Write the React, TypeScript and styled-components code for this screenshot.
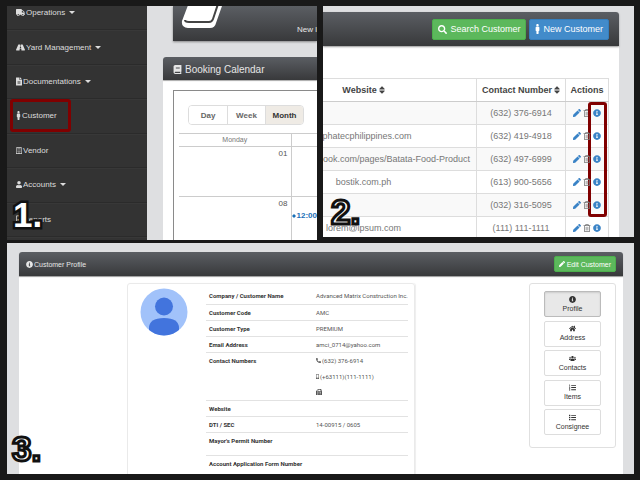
import React from 'react';
import styled, { createGlobalStyle, css } from 'styled-components';
import type { IconType } from 'react-icons';
import {
  FaBook, FaFax, FaFileAlt, FaHome, FaInfoCircle, FaListOl, FaList, FaMale, FaMobileAlt,
  FaPen, FaPhoneAlt, FaRegBuilding, FaRegFileAlt, FaRegTrashAlt, FaRoad, FaSearch,
  FaSort, FaTruck, FaUser, FaUsers,
} from 'react-icons/fa';

const Global = createGlobalStyle`
  * { box-sizing: border-box; }
  body {
    margin: 0;
    background: #191919;
    font-family: "Liberation Sans", Arial, sans-serif;
    color: #555;
  }
  button, table { font: inherit; color: inherit; }
  ul { list-style: none; margin: 0; padding: 0; }
  a { color: inherit; text-decoration: none; }
  svg { flex: none; display: block; }
`;

const barFill = css`
  background: linear-gradient(#5b5e63, #38393b);
  color: #e6e6e6;
`;

const Board = styled.main`
  display: grid;
  grid-template: 234fr 231fr / 310fr 311fr;
  gap: 3px 6px;
  height: 100vh;
  min-height: 480px;
  padding: 6px 6px 6px 7px;
`;

const Panel = styled.section<{ $wide?: boolean; $short?: boolean }>`
  position: relative;
  overflow: hidden;
  min-width: 0;
  min-height: 0;
  background: #dedfe1;
  grid-column: ${p => (p.$wide ? '1 / -1' : 'auto')};
  margin-bottom: ${p => (p.$short ? '3px' : '0')};
`;

const SplitPanel = styled(Panel)`
  display: grid;
  grid-template-columns: 140px 1fr;
`;

const StepNumber = styled.strong<{ $left: number; $solid?: boolean }>`
  position: absolute;
  z-index: 3;
  left: ${p => p.$left}px;
  bottom: 7px;
  font-size: 35px;
  line-height: 36px;
  color: #fff;
  -webkit-text-stroke: ${p => (p.$solid ? 5 : 3)}px #111;
  paint-order: ${p => (p.$solid ? 'stroke' : 'normal')};
`;

const Nav = styled.nav`
  overflow: hidden;
  background: #333;
  color: #ddd;
  font-size: 8px;
`;

const NavList = styled.ul`
  display: flex;
  flex-direction: column;
  height: calc(100% + 10px);
  margin-top: -10px;
  padding-bottom: 3px;
`;

const NavItem = styled.li`
  position: relative;
  flex: 1;
  border-bottom: 1px solid #2b2b2b;
  box-shadow: 0 1px #383838;
`;

const NavLink = styled.a<{ $iconWidth: number }>`
  display: flex;
  align-items: center;
  gap: 1px;
  height: 100%;
  padding-left: 9px;
  svg { width: ${p => p.$iconWidth}px; }
`;

const Caret = styled.i`
  margin-left: 3px;
  border: 3px solid transparent;
  border-top-color: #ddd;
  border-bottom: 0;
`;

const NavHighlight = styled.span`
  position: absolute;
  inset: 0 auto 1px 3px;
  width: 61px;
  border: 3px solid #800000;
  border-radius: 3px;
`;

const Dashboard = styled.div`
  display: flex;
  flex-direction: column;
  gap: 16px;
  min-width: 0;
  overflow: hidden;
`;

const Tile = styled.div`
  ${barFill}
  display: flex;
  justify-content: space-between;
  align-items: flex-end;
  height: 35px;
  margin-left: 26px;
  padding: 0 0 7px 8px;
  font-size: 8px;
  box-shadow: 0 1px 2px #888;
  white-space: nowrap;
`;

const BookArt = styled.svg`
  margin-bottom: 6px;
`;

const CalendarCard = styled.div`
  flex: 1;
  display: flex;
  flex-direction: column;
  margin-left: 16px;
  background: #fff;
  border-radius: 3px 0 0 0;
`;

const CalendarBar = styled.header`
  ${barFill}
  display: flex;
  align-items: center;
  gap: 3px;
  height: 23px;
  padding: 1px 0 0 10px;
  border-radius: 3px 0 0 0;
  box-shadow: 0 1px 1px #aaa;
  font-size: 10px;
`;

const CalendarFrame = styled.div`
  flex: 1;
  margin: 10px 0 0 10px;
  padding: 14px 0 0 5px;
  border: solid #8a8a8a;
  border-width: 1px 0 0 1px;
`;

const ViewSwitch = styled.div`
  display: flex;
  width: fit-content;
  margin-left: 9px;
  border: 1px solid #ddd;
  border-radius: 4px;
  overflow: hidden;
`;

const ViewButton = styled.button<{ $on?: boolean }>`
  width: 38px;
  height: 18px;
  padding: 0;
  border: 0;
  background: ${p => (p.$on ? '#efebe5' : '#fff')};
  font-size: 8px;
  font-weight: bold;
  color: ${p => (p.$on ? '#333' : '#666')};
  & + & { border-left: 1px solid #ddd; }
`;

const MonthTable = styled.table`
  width: 100%;
  margin-top: 8px;
  border-collapse: collapse;
  table-layout: fixed;
  th, td { border: 1px solid #ccc; border-left: 0; padding: 2px 3px; }
  th { height: 13px; padding: 0; font-size: 7px; line-height: 12px; font-weight: normal; color: #777; }
  th:first-child { width: 112px; }
  th:last-child, td:last-child { border-right: 0; }
  td { height: 50px; font-size: 8px; line-height: 10px; text-align: right; vertical-align: top; }
`;

const Booking = styled.a`
  display: flex;
  align-items: center;
  gap: 1px;
  margin: 12px -3px 0;
  font-weight: bold;
  color: #1a70b8;
  white-space: nowrap;
`;

const ListCard = styled.div`
  height: 100%;
  margin: 6px 15px 0 0;
  background: #fff;
  border-radius: 0 3px 0 0;
`;

const ListBar = styled.header`
  ${barFill}
  display: flex;
  justify-content: flex-end;
  align-items: center;
  gap: 3px;
  height: 34px;
  padding-right: 10px;
  border-radius: 0 3px 0 0;
  box-shadow: 0 1px 2px #999;
`;

const BarButton = styled.button<{ $tone: 'green' | 'blue'; $small?: boolean; $iconWidth: number }>`
  display: flex;
  align-items: center;
  justify-content: center;
  gap: ${p => (p.$small ? 2 : 3)}px;
  height: ${p => (p.$small ? 16 : 21)}px;
  padding: 0 ${p => (p.$small ? 4 : 5)}px;
  border: 1px solid ${p => (p.$tone === 'green' ? '#4cae4c' : '#357ebd')};
  border-radius: 2px;
  background: ${p => (p.$tone === 'green' ? '#5cb85c' : '#428bca')};
  color: #fff;
  font-size: ${p => (p.$small ? 7 : 9)}px;
  white-space: nowrap;
  svg { width: ${p => p.$iconWidth}px; }
`;

const TableClip = styled.div`
  display: flex;
  justify-content: flex-end;
  margin: 32px 10px 0 0;
`;

const CustomerTable = styled.table`
  flex: none;
  width: calc(100% + 73px);
  border-collapse: collapse;
  table-layout: fixed;
  font-size: 9px;
  text-align: center;
  white-space: nowrap;
  th, td { height: 23px; padding: 0; border: 1px solid #ddd; line-height: 10px; }
  th { color: #444; border-bottom-color: #ccc; }
  td { color: #777; }
  th:nth-child(2) { width: 89px; }
  th:nth-child(3) { width: 43px; }
  tbody tr:nth-child(odd) { background: #f9f9f9; }
`;

const Sorted = styled.span`
  display: inline-flex;
  align-items: center;
  gap: 2px;
  svg { width: 6px; }
`;

const Actions = styled.div`
  position: relative;
  display: flex;
  justify-content: center;
  gap: 2px;
`;

const IconButton = styled.button`
  display: flex;
  padding: 0;
  border: 0;
  background: none;
  color: #3a83c6;
`;

const ColumnHighlight = styled.span`
  position: absolute;
  top: -7px;
  right: 1px;
  width: 19px;
  height: 115px;
  border: 3px solid #800000;
  border-radius: 3px;
`;

const ProfileCard = styled.div`
  height: 100%;
  margin: 9px 11px 0 12px;
  background: #fff;
  border-radius: 3px 3px 0 0;
`;

const ProfileBar = styled.header`
  ${barFill}
  display: flex;
  align-items: center;
  justify-content: space-between;
  height: 24px;
  padding: 0 7px;
  border-radius: 3px 3px 0 0;
  box-shadow: 0 1px 1px #999;
`;

const ProfileTitle = styled.h2`
  display: flex;
  align-items: center;
  gap: 1px;
  margin: 0;
  font-size: 7px;
  font-weight: normal;
`;

const ProfileBody = styled.div`
  display: flex;
  justify-content: space-between;
  align-items: flex-start;
  padding: 7px 7px 0 108px;
`;

const Details = styled.div`
  display: flex;
  justify-content: space-between;
  align-items: flex-start;
  width: 288px;
  height: 210px;
  padding: 4px 6px 0 12px;
  border: 1px solid #eaeaea;
  border-radius: 3px;
  box-shadow: 1px 0 1px #eee;
`;

const DetailTable = styled.table`
  width: 202px;
  border-collapse: collapse;
  table-layout: fixed;
  font-family: Roboto, "Liberation Sans", sans-serif;
  font-size: 6px;
  line-height: 9px;
  text-align: left;
  white-space: nowrap;
  th, td { padding: 3px; vertical-align: top; border-bottom: 1px solid #e2e2e2; }
  th { width: 107px; color: #333; }
  td { color: #555; }
`;

const DetailRow = styled.tr<{ $tall?: boolean }>`
  height: ${p => (p.$tall ? 23 : 16)}px;
`;

const Phones = styled.ul`
  display: grid;
  gap: 7px;
`;

const PhoneLine = styled.li<{ $iconWidth: number }>`
  display: flex;
  align-items: center;
  gap: 1px;
  height: 9px;
  svg { width: ${p => p.$iconWidth}px; }
`;

const TabCard = styled.aside`
  width: 87px;
  height: 165px;
  padding: 7px 14px 0;
  border: 1px solid #e0e0e0;
  border-radius: 3px;
`;

const TabStack = styled.div`
  display: grid;
  align-content: space-between;
  height: 144px;
`;

const TabButton = styled.button<{ $on?: boolean }>`
  display: flex;
  flex-direction: column;
  align-items: center;
  justify-content: center;
  gap: 1px;
  height: 26px;
  padding: 0;
  border: 1px solid ${p => (p.$on ? '#bbb' : '#ddd')};
  border-radius: 2px;
  background: ${p => (p.$on ? '#e8e8e8' : '#fff')};
  box-shadow: ${p => (p.$on ? 'inset 0 1px 2px #ccc' : 'none')};
  color: #333;
  font-size: 7px;
  line-height: 9px;
`;

const menu: { label: string; icon: IconType; iconWidth: number; caret?: boolean; marked?: boolean }[] = [
  { label: 'Operations', icon: FaTruck, iconWidth: 9, caret: true },
  { label: 'Yard Management', icon: FaRoad, iconWidth: 9, caret: true },
  { label: 'Documentations', icon: FaFileAlt, iconWidth: 6, caret: true },
  { label: 'Customer', icon: FaMale, iconWidth: 5, marked: true },
  { label: 'Vendor', icon: FaRegBuilding, iconWidth: 6 },
  { label: 'Accounts', icon: FaUser, iconWidth: 6, caret: true },
  { label: 'Reports', icon: FaRegFileAlt, iconWidth: 6 },
];

const customers = [
  ['', '(632) 376-6914'],
  ['alphatecphilippines.com', '(632) 419-4918'],
  ['http://www.facebook.com/pages/Batata-Food-Product', '(632) 497-6999'],
  ['bostik.com.ph', '(613) 900-5656'],
  ['', '(032) 316-5095'],
  ['lorem@ipsum.com', '(111) 111-1111'],
];

const tabs: [string, IconType][] = [
  ['Profile', FaInfoCircle],
  ['Address', FaHome],
  ['Contacts', FaUsers],
  ['Items', FaListOl],
  ['Consignee', FaList],
];

const details: { label: string; value?: React.ReactNode; tall?: boolean }[] = [
  { label: 'Company / Customer Name', value: 'Advanced Matrix Construction Inc.' },
  { label: 'Customer Code', value: 'AMC' },
  { label: 'Customer Type', value: 'PREMIUM' },
  { label: 'Email Address', value: 'amci_0714@yahoo.com' },
  {
    label: 'Contact Numbers',
    value: (
      <Phones>
        <PhoneLine $iconWidth={5}><FaPhoneAlt size={5} />(632) 376-6914</PhoneLine>
        <PhoneLine $iconWidth={3}><FaMobileAlt size={5} />(+63111)(111-1111)</PhoneLine>
        <PhoneLine $iconWidth={6}><FaFax size={6} /></PhoneLine>
      </Phones>
    ),
  },
  { label: 'Website' },
  { label: 'DTI / SEC', value: '14-00915 / 0605' },
  { label: "Mayor's Permit Number", tall: true },
  { label: 'Account Application Form Number', tall: true },
];

function MenuPanel() {
  return (
    <SplitPanel>
      <Nav>
        <NavList>
          {menu.map(({ label, icon: Icon, iconWidth, caret, marked }) => (
            <NavItem key={label}>
              <NavLink href="#" $iconWidth={iconWidth}>
                <Icon size={9} />{label}{caret && <Caret />}
              </NavLink>
              {marked && <NavHighlight />}
            </NavItem>
          ))}
        </NavList>
      </Nav>
      <Dashboard>
        <Tile>
          <BookArt width="42" height="34" viewBox="0 0 42 34" aria-hidden="true">
            <path d="M9 6H41V12L35 29Q34 34 29 34H7Q0 33 1 27Z" fill="#fff" />
            <path d="M37 10L32 25Q31 28 28 28H8Q4 28 4 26" fill="none" stroke="#444" strokeWidth="2" />
          </BookArt>
          <span>New l</span>
        </Tile>
        <CalendarCard>
          <CalendarBar><FaBook size={9} />Booking Calendar</CalendarBar>
          <CalendarFrame>
            <ViewSwitch>
              <ViewButton>Day</ViewButton>
              <ViewButton>Week</ViewButton>
              <ViewButton $on>Month</ViewButton>
            </ViewSwitch>
            <MonthTable>
              <thead><tr><th>Monday</th><th /></tr></thead>
              <tbody>
                <tr><td>01</td><td /></tr>
                <tr>
                  <td>08</td>
                  <td>
                    <Booking href="#">
                      <svg width="4" height="4" viewBox="0 0 4 4" aria-hidden="true">
                        <path d="M0 2L2 0L4 2L2 4Z" fill="currentColor" />
                      </svg>
                      12:00
                    </Booking>
                  </td>
                </tr>
              </tbody>
            </MonthTable>
          </CalendarFrame>
        </CalendarCard>
      </Dashboard>
      <StepNumber $left={6} $solid>1.</StepNumber>
    </SplitPanel>
  );
}

function CustomersPanel() {
  return (
    <Panel $short>
      <ListCard>
        <ListBar>
          <BarButton $tone="green" $iconWidth={9}><FaSearch size={9} />Search Customer</BarButton>
          <BarButton $tone="blue" $iconWidth={5}><FaMale size={10} />New Customer</BarButton>
        </ListBar>
        <TableClip>
          <CustomerTable>
            <thead>
              <tr>
                <th><Sorted>Website <FaSort size={10} /></Sorted></th>
                <th><Sorted>Contact Number <FaSort size={10} /></Sorted></th>
                <th>Actions</th>
              </tr>
            </thead>
            <tbody>
              {customers.map(([site, phone], i) => (
                <tr key={phone}>
                  <td>{site}</td>
                  <td>{phone}</td>
                  <td>
                    <Actions>
                      <IconButton aria-label="Edit"><FaPen size={8} /></IconButton>
                      <IconButton aria-label="Delete"><FaRegTrashAlt size={8} color="#777" /></IconButton>
                      <IconButton aria-label="Info"><FaInfoCircle size={8} /></IconButton>
                      {i === 0 && <ColumnHighlight />}
                    </Actions>
                  </td>
                </tr>
              ))}
            </tbody>
          </CustomerTable>
        </TableClip>
      </ListCard>
      <StepNumber $left={8}>2.</StepNumber>
    </Panel>
  );
}

function ProfilePanel() {
  return (
    <Panel $wide>
      <ProfileCard>
        <ProfileBar>
          <ProfileTitle><FaInfoCircle size={7} />Customer Profile</ProfileTitle>
          <BarButton $tone="green" $small $iconWidth={6}><FaPen size={6} />Edit Customer</BarButton>
        </ProfileBar>
        <ProfileBody>
          <Details>
            <svg width="48" height="48" viewBox="0 0 48 48" role="img" aria-label="Customer">
              <clipPath id="disc"><circle cx="24" cy="24" r="23.5" /></clipPath>
              <g clipPath="url(#disc)">
                <rect width="48" height="48" fill="#a1c2fa" />
                <circle cx="24" cy="18.5" r="9" fill="#4274dd" />
                <path d="M9 40Q9 30 24 30T39 40V48H9Z" fill="#4274dd" />
              </g>
            </svg>
            <DetailTable>
              <tbody>
                {details.map(({ label, value, tall }) => (
                  <DetailRow key={label} $tall={tall}>
                    <th scope="row">{label}</th>
                    <td>{value}</td>
                  </DetailRow>
                ))}
              </tbody>
            </DetailTable>
          </Details>
          <TabCard>
            <TabStack>
              {tabs.map(([label, Icon], i) => (
                <TabButton key={label} $on={i === 0}><Icon size={7} />{label}</TabButton>
              ))}
            </TabStack>
          </TabCard>
        </ProfileBody>
      </ProfileCard>
      <StepNumber $left={5}>3.</StepNumber>
    </Panel>
  );
}

export default function App() {
  return (
    <>
      <Global />
      <Board>
        <MenuPanel />
        <CustomersPanel />
        <ProfilePanel />
      </Board>
    </>
  );
}
